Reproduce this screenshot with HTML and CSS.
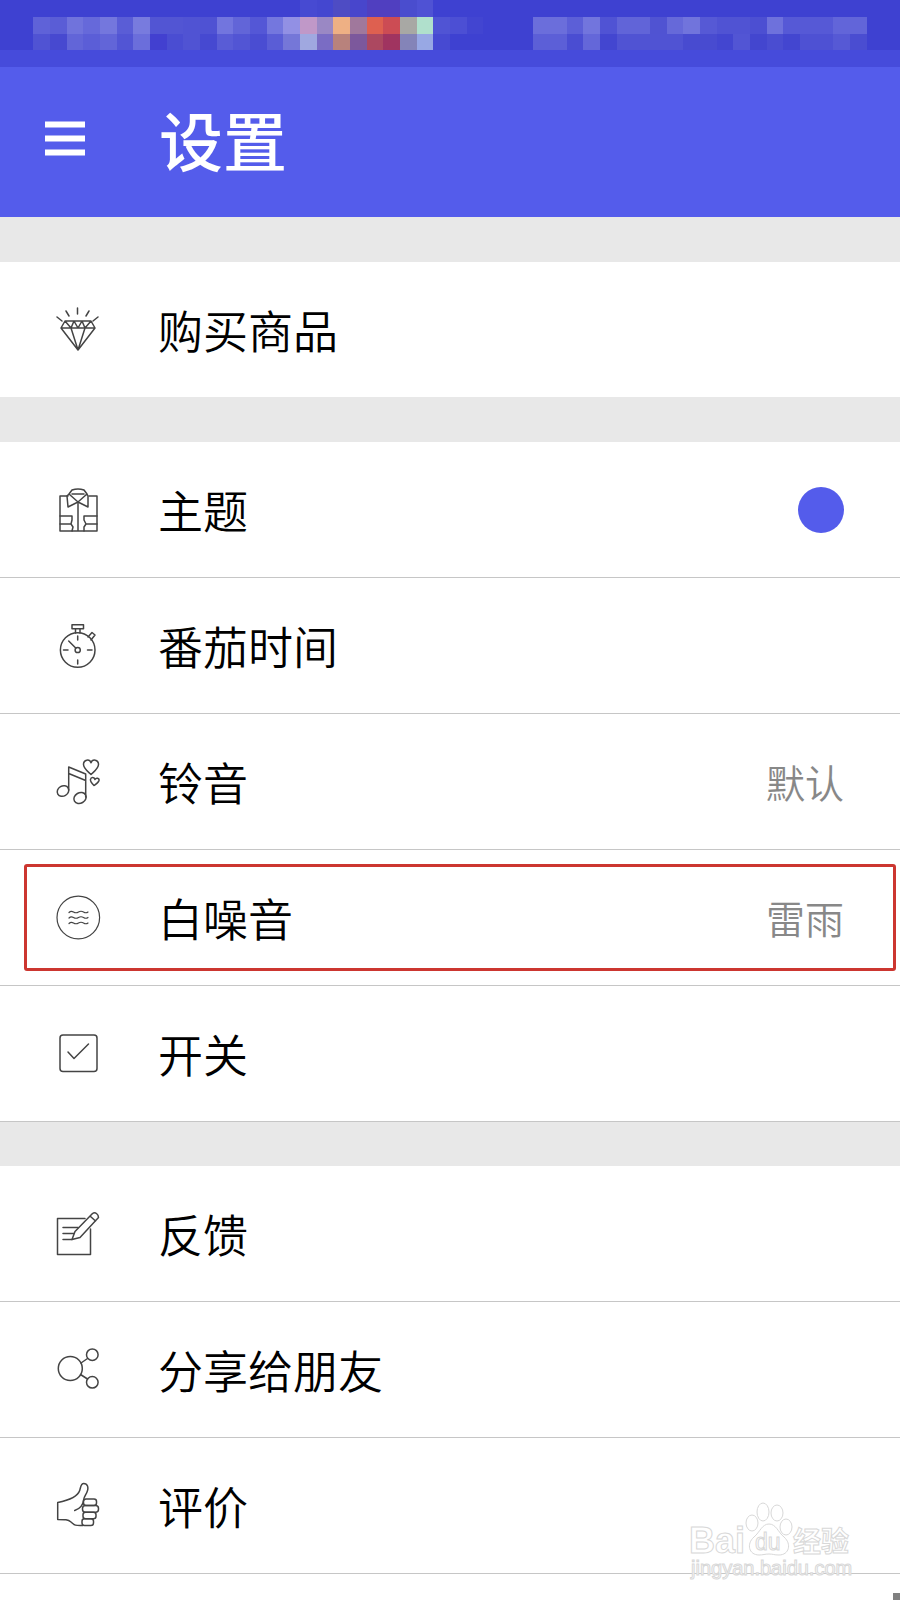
FILE: index.html
```
<!DOCTYPE html>
<html lang="zh-CN">
<head>
    <meta charset="utf-8">
    <title>设置</title>
    <meta name="viewport" content="width=device-width, initial-scale=1.0">
    <link rel="stylesheet" href="styles.css">
</head>
<body>

<header>
    <svg class="status" id="status" viewBox="0 0 54 4" preserveAspectRatio="none" shape-rendering="crispEdges" aria-hidden="true"></svg>
    <div class="bar">
        <button class="menu" type="button" aria-label="菜单">
            <svg width="40" height="42" viewBox="0 0 40 42" fill="#fff">
                <rect y="0.500" width="40" height="6"/>
                <rect y="14.500" width="40" height="6"/>
                <rect y="28.500" width="40" height="6"/>
            </svg>
        </button>
        <h1>设置</h1>
    </div>
</header>

<main>
    <ul class="group">
        <li><a href="#">
            <svg class="icon" viewBox="0 0 48 48">
                <path d="M23.5 2v6M3 11l5 4M12 5l3 5M44 11l-5 4M35 5l-3 5"/>
                <path d="M11 15h26l4 7-17 22L7 22zM7 22h34M11 15l6 7 3-7 4 7 4-7 3 7 6-7M17 22l7 22 7-22"/>
            </svg>
            <span class="name">购买商品</span>
        </a></li>
    </ul>

    <ul class="group">
        <li><a href="#">
            <svg class="icon" viewBox="0 0 48 48">
                <path d="M14 10H6v35h37V10h-8M24 16v29"/>
                <path d="M24 16l-9-8 3-4q6-2 12 0l3 4zM15 8l-2 2 1 11 10-5 10 5 0-11-1-2M18 8h12"/>
                <path d="M6 30h12v4l-1 4 2 3-1 4M6 38h11M43 30H30v4l2 4-2 3v4M43 38H32"/>
            </svg>
            <span class="name">主题</span>
            <span class="dot"></span>
        </a></li>
        <li><a href="#">
            <svg class="icon" viewBox="0 0 48 48">
                <circle cx="23.700" cy="28" r="17.300"/>
                <circle cx="23.700" cy="28" r="2.600"/>
                <path d="M18 2.700h11.500v4H18zM21.500 7v4M26 7v4M34 15l4-4.500 3 2.500-4 5"/>
                <path d="M14.700 19l7 7M23.700 14v4M23.700 38v4M9.500 28h4.500M33.500 28h4.500"/>
            </svg>
            <span class="name">番茄时间</span>
        </a></li>
        <li><a href="#">
            <svg class="icon" viewBox="0 0 48 48">
                <ellipse cx="9" cy="33" rx="6" ry="5" transform="rotate(-30 9 33)"/>
                <ellipse cx="26" cy="40" rx="6.400" ry="5.200" transform="rotate(-30 26 40)"/>
                <path d="M14.700 32V9l17 7v23M14.700 15.500l17 7"/>
                <path d="M37 16.500c-3-3-7.500-6-7.500-10 0-5 6-6 7.500-1.700 1.500-4.300 7.500-3.300 7.500 1.700 0 4-4.500 7-7.500 10z"/>
                <path d="M40 27.500c-2-2-4-4-3.500-6 .5-3 4-2.500 4.500 0 1-2 4.500-1.500 4 1-.5 2-3 3.500-5 5z"/>
            </svg>
            <span class="name">铃音</span>
            <span class="value">默认</span>
        </a></li>
        <li class="marked"><a href="#">
            <svg class="icon thin" viewBox="0 0 48 48">
                <circle cx="24.300" cy="23.500" r="21.300"/>
                <path d="M15 18.500q2-2 4.500-.5t5 0 5 0T34 18M15 24q2-2 4.500-.5t5 0 5 0T34 23.500M15 29.500q2-2 4.500-.5t5 0 5 0T34 29"/>
            </svg>
            <span class="name">白噪音</span>
            <span class="value">雷雨</span>
        </a></li>
        <li><a href="#">
            <svg class="icon" viewBox="0 0 48 48">
                <rect x="6" y="5" width="37" height="36.500" rx="3"/>
                <path d="M14 22l6 6.500L34.500 14"/>
            </svg>
            <span class="name">开关</span>
        </a></li>
    </ul>

    <ul class="group">
        <li><a href="#">
            <svg class="icon" viewBox="0 0 48 48">
                <path d="M31 8.500H3.500v36h33V19M9 17.500h15M9 23.500h11M9 29.500h9"/>
                <path d="M18 29.500l3-8L38.500 3.500q2-1.500 4 0t2 4L26 27.500zM36 6l5.500 5"/>
            </svg>
            <span class="name">反馈</span>
        </a></li>
        <li><a href="#">
            <svg class="icon" viewBox="0 0 48 48">
                <circle cx="16.300" cy="22.500" r="12"/>
                <circle cx="38.300" cy="8.700" r="5.800"/>
                <circle cx="38.300" cy="36.300" r="5.800"/>
                <path d="M27 17l6.500-4.500M26.500 28.500l7 4.500"/>
            </svg>
            <span class="name">分享给朋友</span>
        </a></li>
        <li><a href="#">
            <svg class="icon" viewBox="0 0 48 48">
                <path d="M29 43.500c-9 .5-9-1-12-3.500-3-2.500-6-2.500-13.300-2.500v-17c10-2 20-6 22-12 1-3 1-7 4-7 4 0 5 4 3.500 8-1 3-3 5-3.500 8-.5 5-3 9-9 11"/>
                <rect x="29.500" y="17" width="13" height="6.600" rx="2.500"/>
                <rect x="28.500" y="23.600" width="16" height="6.600" rx="3"/>
                <rect x="29" y="30.200" width="13" height="6.600" rx="2.500"/>
                <rect x="28" y="36.800" width="11.500" height="6.800" rx="2.500"/>
            </svg>
            <span class="name">评价</span>
        </a></li>
    </ul>
</main>

<svg class="watermark" width="180" height="84" viewBox="0 0 180 84" aria-hidden="true">
    <text class="logo" x="7" y="53" font-size="36">Bai</text>
    <g>
        <ellipse cx="70" cy="23" rx="6" ry="8"/>
        <ellipse cx="81" cy="12" rx="6" ry="9"/>
        <ellipse cx="95" cy="13" rx="6" ry="8"/>
        <ellipse cx="104" cy="27" rx="6" ry="8"/>
        <path d="M87 24c7 0 9 8 15 13 8 7 5 18-5 18-5 0-6-1-10-1s-6 1-10 1c-10 0-13-11-5-18 6-5 8-13 15-13z"/>
    </g>
    <text class="logo thin-logo" x="73" y="50" font-size="23">du</text>
    <text class="logo cn" x="111" y="52" font-size="28">经验</text>
    <text class="site" x="9" y="75" font-size="20">jingyan.baidu.com</text>
</svg>
<div class="corner"></div>

<script>
    // blurred carrier / clock area: row, first cell, colours
    var blocks = [
        [0, 18, '#474ad2 #4447d0 #4e4cc4 #4846cc #503fc0 #503fc0 #4a4dce #4f52d4'],
        [1, 2, '#5f62d8 #5a5dd6 #7073dc #6669da #7477dd #5a5dd6 #787bde #5255d3 #5255d3 #5053d3 #4f52d3 #7275de #6265d8 #5457d6 #7477de #9290e4 #c098c8 #9a88c4 #eeb084 #a0789c #de6050 #cc4c54 #a8a8a4 #b0e0cc #5054d4 #4c4fd4 #4245d1'],
        [1, 32, '#6b6edb #6b6edb #5c5fd7 #7275dd #5053d4 #6164d8 #6164d8 #5053d2 #6669d9 #7174dc #5659d5 #5053d3 #5053d3 #4c4fd2 #6e71dc #5659d6 #5659d6 #5659d6 #6265d9 #6265d9'],
        [2, 2, '#5053d3 #4749d0 #6265d8 #5b5ed7 #6265d8 #5255d4 #6b6edb #4240d0 #4a4dd2 #5053d3 #4649d1 #595cd6 #5255d4 #4a4dd2 #5a5dd6 #7577d8 #a0a8e0 #7a6cc4 #b8827c #7c589c #ac4860 #a03460 #8484b8 #98a8e4 #474ad2'],
        [2, 32, '#5c5fd7 #5c5fd7 #4a4dd2 #6467d9 #4346d0 #5053d3 #5053d3 #5053d3 #5053d3 #484bd0 #484bd0 #4346d0 #5255d4 #4346cf #4a4dd1 #4346d0 #4e51d3 #4e51d3 #5659d5 #4a4dd1']
    ];
    var status = '<rect y="3" width="54" height="1" fill="#464bdb"/>';

    blocks.forEach(function (b) {
        b[2].split(' ').forEach(function (color, i) {
            status += '<rect x="' + (b[1] + i) + '" y="' + b[0] + '" width="1" height="1" fill="' + color + '"/>';
        });
    });
    document.getElementById('status').innerHTML = status;
</script>

</body>
</html>
```
FILE: styles.css
```
* { box-sizing: border-box; }

body {
    position: relative;
    min-height: 100vh;
    margin: 0;
    overflow-x: hidden;
    background: #fff;
    color: #000;
    font-family: "Noto Sans CJK SC", sans-serif;
}

header {
    background: #545ceb;
    color: #fff;
}

.status {
    display: block;
    width: 100%;
    height: 67px;
    background: #3e41d1;
}

.bar {
    display: flex;
    align-items: center;
    gap: 74px;
    height: 150px;
    padding: 0 45px;
}

.menu {
    padding: 0;
    border: 0;
    background: none;
    cursor: pointer;
}

.menu svg { display: block; }

h1 {
    margin: 0;
    padding-bottom: 8px;
    font-size: 64px;
    font-weight: 500;
    line-height: 80px;
}

.group {
    list-style: none;
    margin: 0;
    padding: 0;
    border-top: 44px solid #e8e8e8;
}

.group:first-child { border-top-width: 45px; }

.group li {
    position: relative;
    border-bottom: 1px solid #c6c6c6;
}

.group:first-child li { border-color: #e8e8e8; }

.group a {
    display: flex;
    align-items: center;
    height: 135px;
    padding: 0 56px 0 54px;
    color: #000;
    text-decoration: none;
}

.icon {
    flex: none;
    width: 48px;
    height: 48px;
    margin-right: 56px;
    fill: none;
    stroke: #444;
    stroke-width: 1.5;
    stroke-linejoin: round;
    stroke-linecap: round;
}

.thin { stroke-width: 1.2; }

.name {
    flex: 1;
    font-size: 45px;
    font-weight: 350;
    line-height: 64px;
}

.value {
    padding-bottom: 2px;
    color: #888;
    font-size: 39px;
    font-weight: 350;
    line-height: 64px;
}

.dot {
    width: 46px;
    height: 46px;
    border-radius: 50%;
    background: #545ceb;
}

/* highlight frame over the row */
.marked::after {
    content: "";
    position: absolute;
    top: 14px;
    right: 4px;
    bottom: 14px;
    left: 24px;
    border: 3px solid #cc3630;
    border-radius: 3px;
    pointer-events: none;
}

.watermark {
    position: absolute;
    right: 38px;
    bottom: 16px;
    fill: #fff;
    stroke: #d8d8d8;
    stroke-width: 1;
    pointer-events: none;
}

.logo {
    font-family: "Liberation Sans", sans-serif;
    font-weight: bold;
}

.thin-logo { font-weight: normal; }

.cn { font-family: "Noto Sans CJK SC", sans-serif; }

.site { font-family: "Liberation Sans", sans-serif; }

.corner {
    position: absolute;
    right: 0;
    bottom: 0;
    width: 7px;
    height: 7px;
    background: #808080;
}
```
